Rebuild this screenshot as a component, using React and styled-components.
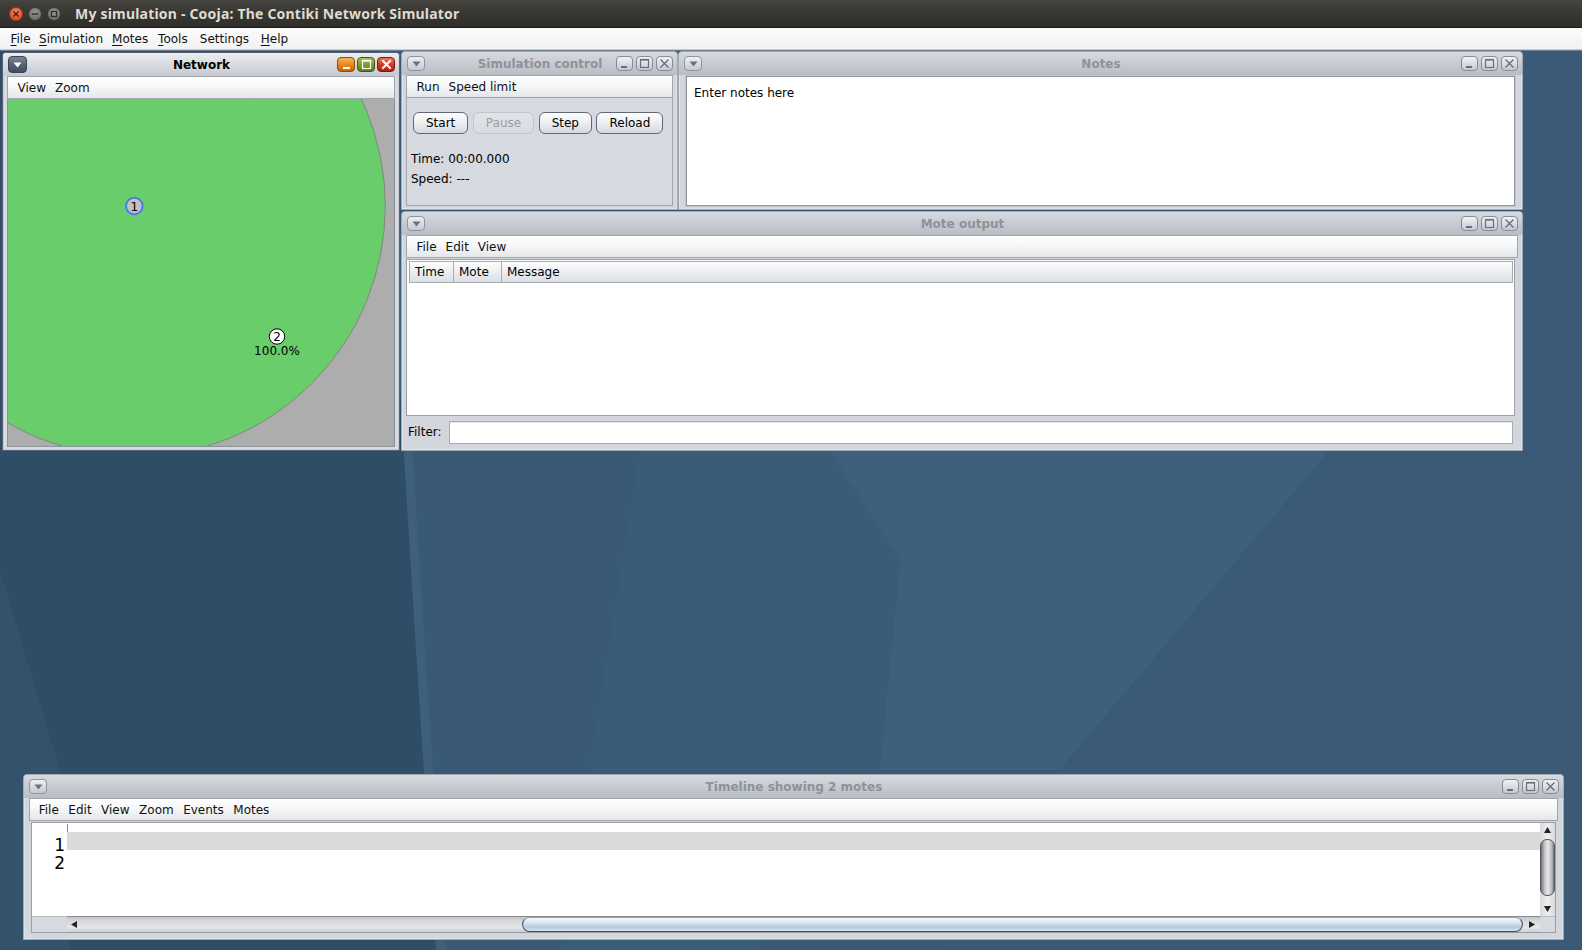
import React from 'react';
import styled, { createGlobalStyle, css } from 'styled-components';

const GlobalStyle = createGlobalStyle`
  html, body { margin: 0; padding: 0; overflow: hidden; background: #2f4d67; }
  body { font-family: "DejaVu Sans", "Liberation Sans", sans-serif; font-size: 12px; color: #000; }
  * { box-sizing: border-box; }
`;

const Screen = styled.div`
  width: 1582px;
  height: 950px;
  display: flex;
  flex-direction: column;
  overflow: hidden;
`;

/* ---------- Ubuntu window title bar ---------- */
const WinTitleBar = styled.div`
  height: 28px;
  flex: none;
  display: flex;
  align-items: center;
  padding-left: 9px;
  background: linear-gradient(#45443f, #3a3935 40%, #2f2e2b);
  border-bottom: 1px solid #1e1d1b;
`;
const WinButtons = styled.div`
  display: flex;
  gap: 5px;
`;
const WinButton = styled.div`
  width: 14px;
  height: 14px;
  border-radius: 50%;
  display: flex;
  align-items: center;
  justify-content: center;
  ${p => p.$close ? css`
    background: radial-gradient(circle at 50% 35%, #f58c6a, #e2512c 70%);
    border: 1px solid #a63a1c;
  ` : css`
    background: radial-gradient(circle at 50% 35%, #96958f, #6f6e69 75%);
    border: 1px solid #3a3935;
  `}
`;
const WinTitle = styled.div`
  margin-left: 14px;
  font-family: "Noto Sans", "Open Sans", sans-serif;
  font-weight: bold;
  font-size: 14px;
  color: #dfdbd2;
  letter-spacing: 0.2px;
`;

/* ---------- Application menu ---------- */
const AppMenuBar = styled.div`
  height: 22px;
  flex: none;
  display: flex;
  align-items: center;
  padding-left: 6px;
  background: linear-gradient(#fbfbfb, #f2f2f2);
  border-bottom: 1px solid #c9cbcf;
`;
const AppMenuItem = styled.span`
  width: ${p => p.$w}px;
  padding-left: 4.5px;
  font-size: 12px;
  color: #111;
  white-space: pre;
  u { text-decoration: underline; text-underline-offset: 2px; }
`;
const MenuItem = styled.span`
  padding: 0 ${p => p.$pad ?? 4.5}px;
  font-size: 12px;
  color: #111;
  white-space: pre;
`;

/* ---------- Desktop ---------- */
const Desktop = styled.div`
  flex: 1;
  position: relative;
  overflow: hidden;
  background: #375772;
  border-top: 1px solid #6f7f92;
`;
const Wallpaper = styled.svg`
  position: absolute;
  left: 0;
  top: 0;
`;

/* ---------- Internal frame (Nimbus) ---------- */
const Frame = styled.div`
  position: absolute;
  left: ${p => p.$x}px;
  top: ${p => p.$y}px;
  width: ${p => p.$w}px;
  height: ${p => p.$h}px;
  display: flex;
  flex-direction: column;
  border: 1px solid ${p => p.$active ? '#566177' : '#a2a8b1'};
  border-radius: 4px 4px 0 0;
  background: ${p => p.$active ? '#d8dbe1' : '#d3d6dc'};
  box-shadow: inset 0 0 0 1px ${p => p.$active ? '#c7ccd4' : '#dfe2e7'};
`;
const FrameTitle = styled.div`
  height: 23px;
  flex: none;
  display: grid;
  grid-template-columns: 1fr auto 1fr;
  align-items: center;
  padding: 0 4px 0 5px;
  border-radius: 3px 3px 0 0;
  background: ${p => p.$active
    ? 'linear-gradient(#eceef1, #d9dce1 45%, #c6cad1)'
    : 'linear-gradient(#d7dadf, #c9ccd2 45%, #b9bdc5)'};
`;
const FrameTitleText = styled.div`
  font-weight: bold;
  font-size: 12px;
  color: ${p => p.$active ? '#000' : '#8e9299'};
  white-space: nowrap;
`;
const TitleLeft = styled.div`
  display: flex;
  align-items: center;
`;
const TitleRight = styled.div`
  display: flex;
  justify-content: flex-end;
  align-items: center;
  gap: ${p => p.$active ? 2 : 3}px;
`;
const MenuDrop = styled.div`
  width: ${p => p.$active ? 19 : 18}px;
  height: ${p => p.$active ? 17 : 15}px;
  border-radius: 4px;
  display: flex;
  align-items: center;
  justify-content: center;
  ${p => p.$active ? css`
    background: linear-gradient(#7c8598, #566074 55%, #444d60);
    border: 1px solid #3a4354;
  ` : css`
    background: linear-gradient(#eef0f3, #d5d8dd 60%, #c6cad0);
    border: 1px solid #8f959e;
  `}
`;
const FrameBtn = styled.div`
  width: ${p => p.$active ? 18 : 17}px;
  height: 15px;
  border-radius: 4px;
  display: flex;
  align-items: center;
  justify-content: center;
  ${p => p.$kind === 'min' && p.$active && css`
    background: linear-gradient(#f6b35a, #e98a1e 50%, #c8650a);
    border: 1px solid #8d4a08;
  `}
  ${p => p.$kind === 'max' && p.$active && css`
    background: linear-gradient(#a8c25a, #7f9d2c 50%, #5f7b16);
    border: 1px solid #435810;
  `}
  ${p => p.$kind === 'close' && p.$active && css`
    background: linear-gradient(#ee7660, #d43c26 50%, #b0200f);
    border: 1px solid #7e160a;
  `}
  ${p => !p.$active && css`
    background: linear-gradient(#f1f2f4, #d8dbe0 55%, #c5c9cf);
    border: 1px solid #868c95;
  `}
`;
const FrameBody = styled.div`
  flex: 1;
  min-height: 0;
  display: flex;
  flex-direction: column;
  padding: ${p => p.$pad || '0 4px 3px 4px'};
`;

const InnerMenuBar = styled.div`
  height: 23px;
  flex: none;
  display: flex;
  align-items: center;
  padding-left: ${p => p.$pl ?? 5}px;
  border: 1px solid #a1a6ae;
  background: linear-gradient(#ffffff, #f6f7f8 45%, #e4e6e9);
`;

/* ---------- Network ---------- */
const Canvas = styled.div`
  flex: 1;
  position: relative;
  overflow: hidden;
  background: #adadad;
  border: 1px solid #8c929a;
  border-top: none;
`;
const CanvasSvg = styled.svg`
  display: block;
`;

/* ---------- Simulation control ---------- */
const ControlPanel = styled.div`
  flex: 1;
  display: flex;
  flex-direction: column;
  padding: 14px 4px 0 4px;
  border: 1px solid #a4a9b1;
  border-top: none;
  background: #d6d9df;
`;
const ButtonRow = styled.div`
  display: flex;
  gap: 4.5px;
  padding-left: 2px;
`;
const PushButton = styled.div`
  height: 22px;
  padding: 0 12px;
  display: flex;
  align-items: center;
  border-radius: 6px;
  font-size: 12px;
  ${p => p.$disabled ? css`
    border: 1px solid #c2c6cd;
    background: linear-gradient(#e2e4e8, #d8dbe0);
    color: #9a9ea5;
  ` : css`
    border: 1px solid #5f6878;
    background: linear-gradient(#fdfdfd, #eef0f2 45%, #d4d8de);
    color: #000;
  `}
`;
const StatusLine = styled.div`
  font-size: 12px;
  height: 20px;
  line-height: 20px;
  margin-top: ${p => p.$mt ?? 0}px;
`;

/* ---------- Notes ---------- */
const NotesArea = styled.div`
  flex: 1;
  margin: 1px 3px 0 3px;
  background: #fff;
  border: 1px solid #8f959e;
  box-shadow: 0 0 0 1px #c3c7cd;
  padding: 9px 7px;
  font-size: 12px;
`;

/* ---------- Mote output ---------- */
const TableBox = styled.div`
  flex: 1;
  margin-top: 1px;
  margin-right: 3px;
  border: 1px solid #9ba0a8;
  background: #fff;
  display: flex;
  flex-direction: column;
  padding: 1px 1px 0 2px;
`;
const TableHead = styled.div`
  height: 22px;
  flex: none;
  display: grid;
  grid-template-columns: 44px 48px 1fr;
  background: linear-gradient(#fdfdfd, #eceef1 50%, #dcdfe3);
  border: 1px solid #a6abb3;
`;
const HeadCell = styled.div`
  display: flex;
  align-items: center;
  padding-left: 5px;
  font-size: 12px;
  border-right: ${p => p.$last ? 'none' : '1px solid #a6abb3'};
`;
const TableRows = styled.div`
  flex: 1;
  background: #fff;
`;
const FilterRow = styled.div`
  height: 31px;
  flex: none;
  display: flex;
  align-items: center;
  gap: 7px;
  padding: 1px 5px 0 2px;
`;
const FilterInput = styled.div`
  flex: 1;
  height: 23px;
  background: #fff;
  border: 1px solid #a8adb5;
  box-shadow: inset 0 1px 0 #e6e8eb;
`;

/* ---------- Timeline ---------- */
const TimelinePane = styled.div`
  flex: 1;
  margin: 1px 2px 0 2px;
  border: 1px solid #9ba0a8;
  display: grid;
  grid-template-columns: 35px 1fr 15px;
  grid-template-rows: 1fr 16px;
  background: #d6d9df;
`;
const RowHeader = styled.div`
  background: #fff;
  padding-top: 13px;
  display: flex;
  flex-direction: column;
  align-items: flex-end;
  padding-right: 2px;
`;
const RowNumber = styled.div`
  height: 18px;
  line-height: 18px;
  font-size: 17px;
`;
const Viewport = styled.div`
  position: relative;
  background: #fff;
  padding-top: 9px;
`;
const Tick = styled.div`
  position: absolute;
  left: 0;
  top: 1px;
  width: 1px;
  height: 8px;
  background: #8a8a8a;
`;
const TimelineRow = styled.div`
  height: 18px;
  background: ${p => p.$hl ? '#dadada' : 'transparent'};
`;
const VScroll = styled.div`
  background: linear-gradient(90deg, #d8d8da, #eeeeef 50%, #d8d8da);
  display: flex;
  flex-direction: column;
  align-items: center;
`;
const ArrowBtn = styled.div`
  width: 15px;
  height: ${p => p.$h ?? 15}px;
  display: flex;
  align-items: center;
  justify-content: center;
  flex: none;
`;
const VThumb = styled.div`
  width: 15px;
  height: 57px;
  margin: 2px 0;
  border-radius: 7px;
  background: linear-gradient(90deg, #6e7076, #c9cacd 30%, #e8e8ea 55%, #b3b4b8 85%, #6a6c72);
  border: 1px solid #55575c;
`;
const VSpacer = styled.div`
  flex: 1;
`;
const Corner = styled.div`
  background: #d6d9df;
  border-top: 1px solid #b9bdc4;
`;
const HScroll = styled.div`
  display: flex;
  align-items: stretch;
  background: linear-gradient(#c3c4c7, #d8d9dc 30%, #e4e5e7 70%, #cfd0d3);
  border-top: 1px solid #8a8c90;
`;
const HTrack = styled.div`
  flex: 1;
  position: relative;
`;
const HThumb = styled.div`
  position: absolute;
  top: 0;
  bottom: 0;
  left: ${p => p.$left}px;
  width: ${p => p.$width}px;
  border-radius: 8px;
  border: 1px solid #3f4f62;
  border-top-color: #8fa3b9;
  background: linear-gradient(#f5f8fb, #dbe5ef 35%, #b7c9db 70%, #d7e2ec);
`;

/* ---------- Icons ---------- */
const DropTri = ({ active }) => (
  <svg width="9" height="6" viewBox="0 0 9 6">
    <path d="M0.5 0.5 H8.5 L4.5 5.5 Z" fill={active ? '#fff' : '#6d737c'} />
  </svg>
);
const MinIcon = ({ active }) => (
  <svg width="11" height="11" viewBox="0 0 11 11">
    <rect x="2" y="8" width={active ? 7 : 6} height="2" fill={active ? '#fff' : '#6a7079'} />
  </svg>
);
const MaxIcon = ({ active }) => (
  <svg width="11" height="11" viewBox="0 0 11 11">
    <rect x="1.5" y="1.5" width="8" height="8" fill="none" stroke={active ? '#fff' : '#6a7079'} strokeWidth="1.2" />
    <rect x="1.5" y="1.2" width="8" height="1.4" fill={active ? '#fff' : '#6a7079'} />
  </svg>
);
const CloseIcon = ({ active }) => (
  <svg width="11" height="11" viewBox="0 0 11 11">
    <path d="M2 2 L9 9 M9 2 L2 9" stroke={active ? '#fff' : '#6a7079'} strokeWidth={active ? 2 : 1.4} strokeLinecap="square" />
  </svg>
);
const Arrow = ({ dir }) => {
  const d = {
    up: 'M1 7 L4.5 1 L8 7 Z',
    down: 'M1 1 L8 1 L4.5 7 Z',
    left: 'M7 1 L7 8 L1 4.5 Z',
    right: 'M1 1 L1 8 L7 4.5 Z',
  }[dir];
  return (
    <svg width="9" height="9" viewBox="0 0 9 9"><path d={d} fill="#222" /></svg>
  );
};

const InternalFrame = ({ x, y, w, h, title, active, children, bodyPad }) => (
  <Frame $x={x} $y={y} $w={w} $h={h} $active={active}>
    <FrameTitle $active={active}>
      <TitleLeft>
        <MenuDrop $active={active}><DropTri active={active} /></MenuDrop>
      </TitleLeft>
      <FrameTitleText $active={active}>{title}</FrameTitleText>
      <TitleRight $active={active}>
        <FrameBtn $kind="min" $active={active}><MinIcon active={active} /></FrameBtn>
        <FrameBtn $kind="max" $active={active}><MaxIcon active={active} /></FrameBtn>
        <FrameBtn $kind="close" $active={active}><CloseIcon active={active} /></FrameBtn>
      </TitleRight>
    </FrameTitle>
    <FrameBody $pad={bodyPad}>{children}</FrameBody>
  </Frame>
);

const Menus = ({ items, pl, pad }) => (
  <InnerMenuBar $pl={pl}>
    {items.map(i => <MenuItem key={i} $pad={pad}>{i}</MenuItem>)}
  </InnerMenuBar>
);

const WallpaperArt = () => (
  <Wallpaper width="1582" height="899" viewBox="0 0 1582 899">
    <rect x="0" y="0" width="1582" height="899" fill="#395974" />
    <path d="M0 0 H380 C392 200 410 520 436 899 H0 Z" fill="#2f4d67" />
    <path d="M0 520 L60 719 L70 899 H0 Z" fill="#33526c" />
    <path d="M380 0 C392 200 410 520 436 899 H446 C418 520 400 200 392 0 Z" fill="#3f607b" />
    <path d="M640 399 L830 399 L900 510 L880 719 L760 899 H560 Z" fill="#3b5c77" />
    <path d="M830 399 L1330 399 L1060 719 L880 719 L900 510 Z" fill="#3f607c" />
    <path d="M1330 399 H1582 V899 H940 L1060 719 Z" fill="#3a5a76" />
    <path d="M1522 0 H1582 V420 H1522 Z" fill="#3a5a77" />
  </Wallpaper>
);

export default function App() {
  return (
    <Screen>
      <GlobalStyle />
      <WinTitleBar>
        <WinButtons>
          <WinButton $close>
            <svg width="8" height="8" viewBox="0 0 8 8"><path d="M1.5 1.5 L6.5 6.5 M6.5 1.5 L1.5 6.5" stroke="#4a1a0c" strokeWidth="1.4" /></svg>
          </WinButton>
          <WinButton>
            <svg width="8" height="8" viewBox="0 0 8 8"><path d="M1 4 H7" stroke="#2e2d2a" strokeWidth="1.4" /></svg>
          </WinButton>
          <WinButton>
            <svg width="8" height="8" viewBox="0 0 8 8"><rect x="1.5" y="1.5" width="5" height="5" fill="none" stroke="#2e2d2a" strokeWidth="1.2" /></svg>
          </WinButton>
        </WinButtons>
        <WinTitle>My simulation - Cooja: The Contiki Network Simulator</WinTitle>
      </WinTitleBar>

      <AppMenuBar>
        <AppMenuItem $w={28.6}><u>F</u>ile</AppMenuItem>
        <AppMenuItem $w={73}><u>S</u>imulation</AppMenuItem>
        <AppMenuItem $w={46}><u>M</u>otes</AppMenuItem>
        <AppMenuItem $w={41.7}><u>T</u>ools</AppMenuItem>
        <AppMenuItem $w={61}>Settings</AppMenuItem>
        <AppMenuItem $w={32}><u>H</u>elp</AppMenuItem>
      </AppMenuBar>

      <Desktop>
        <WallpaperArt />

        <InternalFrame x={2} y={1} w={398} h={399} title="Network" active>
          <Menus items={['View', 'Zoom']} />
          <Canvas>
            <CanvasSvg width="388" height="348" viewBox="0 0 388 348">
              <circle cx="126.3" cy="107" r="251" fill="#68cd6a" stroke="#858585" strokeWidth="1" />
              <circle cx="126.3" cy="107" r="8.3" fill="#c2c2c2" stroke="#4a7ee6" strokeWidth="2" />
              <text x="126.3" y="111.5" fontSize="12" textAnchor="middle" fontFamily="DejaVu Sans" fill="#000">1</text>
              <circle cx="269" cy="237.5" r="7.7" fill="#fff" stroke="#000" strokeWidth="1" />
              <text x="269" y="242" fontSize="12" textAnchor="middle" fontFamily="DejaVu Sans" fill="#000">2</text>
              <text x="269" y="256" fontSize="12" textAnchor="middle" fontFamily="DejaVu Sans" fill="#000">100.0%</text>
            </CanvasSvg>
          </Canvas>
        </InternalFrame>

        <InternalFrame x={401} y={0} w={277} h={159} title="Simulation control">
          <Menus items={['Run', 'Speed limit']} />
          <ControlPanel>
            <ButtonRow>
              <PushButton>Start</PushButton>
              <PushButton $disabled>Pause</PushButton>
              <PushButton>Step</PushButton>
              <PushButton>Reload</PushButton>
            </ButtonRow>
            <StatusLine $mt={15}>Time: 00:00.000</StatusLine>
            <StatusLine>Speed: ---</StatusLine>
          </ControlPanel>
        </InternalFrame>

        <InternalFrame x={678} y={0} w={845} h={159} title="Notes">
          <NotesArea>Enter notes here</NotesArea>
        </InternalFrame>

        <InternalFrame x={401} y={160} w={1122} h={240} title="Mote output">
          <Menus items={['File', 'Edit', 'View']} />
          <TableBox>
            <TableHead>
              <HeadCell>Time</HeadCell>
              <HeadCell>Mote</HeadCell>
              <HeadCell $last>Message</HeadCell>
            </TableHead>
            <TableRows />
          </TableBox>
          <FilterRow>
            <span>Filter:</span>
            <FilterInput />
          </FilterRow>
        </InternalFrame>

        <InternalFrame x={23} y={723} w={1541} h={166} title="Timeline showing 2 motes" bodyPad="0 5px 6px 5px">
          <Menus items={['File', 'Edit', 'View', 'Zoom', 'Events', 'Motes']} pl={4} pad={4.75} />
          <TimelinePane>
            <RowHeader>
              <RowNumber>1</RowNumber>
              <RowNumber>2</RowNumber>
            </RowHeader>
            <Viewport>
              <Tick />
              <TimelineRow $hl />
              <TimelineRow />
            </Viewport>
            <VScroll>
              <ArrowBtn $h={14}><Arrow dir="up" /></ArrowBtn>
              <VThumb />
              <VSpacer />
              <ArrowBtn $h={14}><Arrow dir="down" /></ArrowBtn>
            </VScroll>
            <Corner />
            <HScroll>
              <ArrowBtn><Arrow dir="left" /></ArrowBtn>
              <HTrack>
                <HThumb $left={440} $width={1001} />
              </HTrack>
              <ArrowBtn><Arrow dir="right" /></ArrowBtn>
            </HScroll>
            <Corner />
          </TimelinePane>
        </InternalFrame>
      </Desktop>
    </Screen>
  );
}
